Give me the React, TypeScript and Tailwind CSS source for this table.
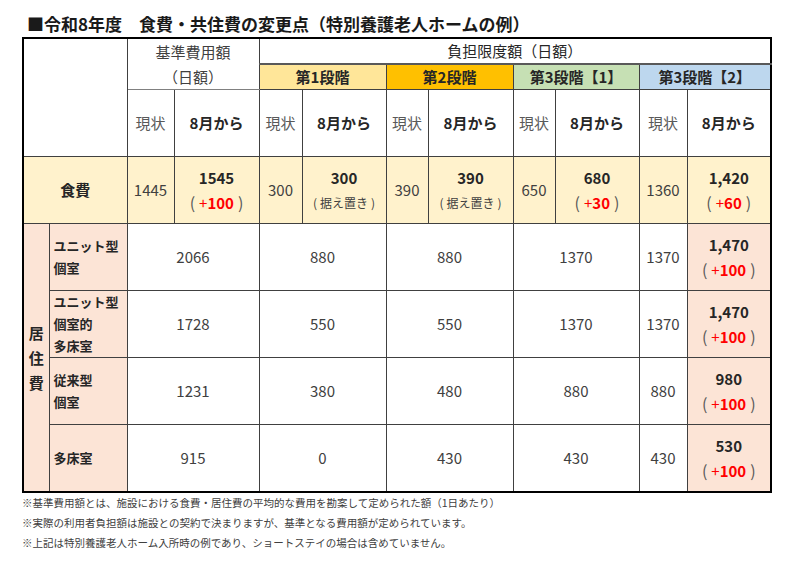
import React from 'react';

const cell = "border border-[#404040] text-center align-middle p-0";

const stages = [
    { label: "第1段階", bg: "bg-[#FFE699]" },
    { label: "第2段階", bg: "bg-[#FFC000]" },
    { label: "第3段階【1】", bg: "bg-[#C6E0B4]" },
    { label: "第3段階【2】", bg: "bg-[#BDD7EE]" },
];

const rooms = [
    { label: ["ユニット型", "個室"], base: "2066", s1: "880", s2: "880", s31: "1370", now: "1370", next: "1,470" },
    { label: ["ユニット型", "個室的", "多床室"], base: "1728", s1: "550", s2: "550", s31: "1370", now: "1370", next: "1,470" },
    { label: ["従来型", "個室"], base: "1231", s1: "380", s2: "480", s31: "880", now: "880", next: "980" },
    { label: ["多床室"], base: "915", s1: "0", s2: "430", s31: "430", now: "430", next: "530" },
];

function Change({ value, diff }: { value: string; diff: string }) {
    return (
        <div className="flex flex-col items-center leading-[25px]">
            <span className="font-bold text-[#262626]">{value}</span>
            <span className="text-[#595959]">
                <span className="mr-[4px] text-[16px]">(</span>
                <span className="text-[#ff0000]">+</span>
                <span className="font-bold text-[#ff0000]">{diff}</span>
                <span className="ml-[4px] text-[16px]">)</span>
            </span>
        </div>
    );
}

function Kept({ value }: { value: string }) {
    return (
        <div className="flex flex-col items-center leading-[25px]">
            <span className="font-bold text-[#262626]">{value}</span>
            <span className="text-[12px] text-[#404040]">
                <span className="mr-[3px]">(</span>据え置き<span className="ml-[3px]">)</span>
            </span>
        </div>
    );
}

export default function App() {
    return (
        <div className="w-[800px] h-[569px] bg-white font-['Noto_Sans_CJK_JP','Noto_Sans',sans-serif] text-[15px] text-[#404040]">
            <h1 className="pl-[27px] pt-[13px] pb-[2px] leading-[22px] text-[17px] font-bold text-[#1a1a1a]">
                ■令和8年度　食費・共住費の変更点（特別養護老人ホームの例）
            </h1>
            <table className="table-fixed border-collapse border-2 border-black w-[750px] ml-[22px]">
                <colgroup>
                    <col className="w-[26px]" />
                    <col className="w-[78px]" />
                    <col className="w-[47px]" />
                    <col className="w-[85px]" />
                    <col className="w-[43px]" />
                    <col className="w-[84px]" />
                    <col className="w-[42px]" />
                    <col className="w-[85px]" />
                    <col className="w-[42px]" />
                    <col className="w-[84px]" />
                    <col className="w-[48px]" />
                    <col className="w-[84px]" />
                </colgroup>
                <tbody>
                    <tr className="h-[26px]">
                        <td className={cell} rowSpan={3} colSpan={2}></td>
                        <td className={`${cell} leading-[25px] text-[#404040] border-b-[#808080]`} rowSpan={2} colSpan={2}>
                            基準費用額<br />（日額）
                        </td>
                        <td className={`${cell} text-[#262626] border-b-2 border-b-[#595959]`} colSpan={8}>
                            負担限度額（日額）
                        </td>
                    </tr>
                    <tr className="h-[25px]">
                        {stages.map((s) => (
                            <td key={s.label} className={`${cell} ${s.bg} font-bold text-[#262626]`} colSpan={2}>
                                {s.label}
                            </td>
                        ))}
                    </tr>
                    <tr className="h-[67px]">
                        {[0, 1, 2, 3, 4].map((i) => (
                            <React.Fragment key={i}>
                                <td className={`${cell} text-[#595959]`}>現状</td>
                                <td className={`${cell} font-bold text-[#262626]`}>8月から</td>
                            </React.Fragment>
                        ))}
                    </tr>
                    <tr className="h-[67px] bg-[#FFF2CC]">
                        <td className={`${cell} font-bold text-[#262626]`} colSpan={2}>食費</td>
                        <td className={cell}>1445</td>
                        <td className={cell}><Change value="1545" diff="100" /></td>
                        <td className={cell}>300</td>
                        <td className={cell}><Kept value="300" /></td>
                        <td className={cell}>390</td>
                        <td className={cell}><Kept value="390" /></td>
                        <td className={cell}>650</td>
                        <td className={cell}><Change value="680" diff="30" /></td>
                        <td className={cell}>1360</td>
                        <td className={cell}><Change value="1,420" diff="60" /></td>
                    </tr>
                    {rooms.map((r, i) => (
                        <tr key={i} className="h-[67px]">
                            {i === 0 && (
                                <td className={`${cell} bg-[#FCE4D6] font-bold text-[#262626] leading-[25px]`} rowSpan={4}>
                                    居<br />住<br />費
                                </td>
                            )}
                            <td className={`${cell} bg-[#FCE4D6] text-left pl-[4px] text-[13px] font-bold text-[#262626] leading-[22px]`}>
                                {r.label.map((l) => (
                                    <div key={l}>{l}</div>
                                ))}
                            </td>
                            <td className={cell} colSpan={2}>{r.base}</td>
                            <td className={cell} colSpan={2}>{r.s1}</td>
                            <td className={cell} colSpan={2}>{r.s2}</td>
                            <td className={cell} colSpan={2}>{r.s31}</td>
                            <td className={cell}>{r.now}</td>
                            <td className={`${cell} bg-[#FCE4D6]`}><Change value={r.next} diff="100" /></td>
                        </tr>
                    ))}
                </tbody>
            </table>
            <div className="pl-[22px] text-[10.5px] leading-[20px] text-[#404040]">
                <p>※基準費用額とは、施設における食費・居住費の平均的な費用を勘案して定められた額（1日あたり）</p>
                <p>※実際の利用者負担額は施設との契約で決まりますが、基準となる費用額が定められています。</p>
                <p>※上記は特別養護老人ホーム入所時の例であり、ショートステイの場合は含めていません。</p>
            </div>
        </div>
    );
}
